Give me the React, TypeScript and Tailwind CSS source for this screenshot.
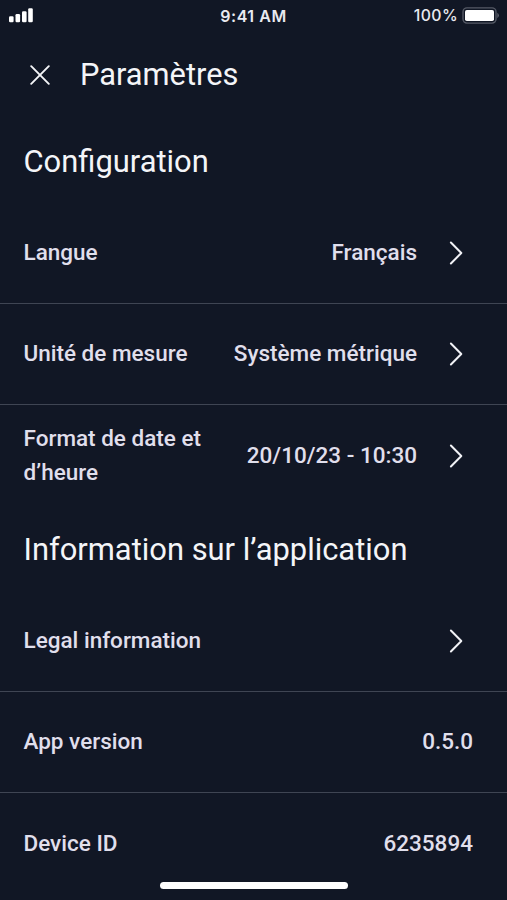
import { ReactNode } from "react";

interface SettingsRowProps {
  label: ReactNode;
  value?: string;
  chevron?: boolean;
  divider?: boolean;
}

function Chevron() {
  return (
    <svg width="16" height="24" viewBox="0 0 16 24" fill="none" className="ml-[31px] mr-[9px] shrink-0">
      <path
        d="M2.9 1.5 L13.3 12 L2.9 22.5"
        stroke="#F1F2F6"
        strokeWidth="2"
        strokeLinecap="round"
        strokeLinejoin="round"
      />
    </svg>
  );
}

function SettingsRow({ label, value, chevron, divider }: SettingsRowProps) {
  return (
    <div
      className={`h-[101.4px] shrink-0 flex items-center justify-between pl-[23.5px] pr-[34px] ${
        divider ? "border-b border-[#3F4553]" : ""
      }`}
    >
      <span className="leading-[33.8px]">{label}</span>
      <div className="flex items-center">
        {value && <span className="leading-[33.8px]">{value}</span>}
        {chevron && <Chevron />}
      </div>
    </div>
  );
}

function StatusBar() {
  return (
    <div className="h-[30px] shrink-0 grid grid-cols-[1fr_auto_1fr] items-center pl-[9px] pr-[7px] font-[Inter,sans-serif] text-[15.8px] text-[#E9EAF0]">
      <svg width="25" height="15" viewBox="0 0 25 15" fill="#FFFFFF">
        <rect x="0" y="8.3" width="4.6" height="6" rx="1.2" />
        <rect x="6.5" y="6" width="4.6" height="8.3" rx="1.2" />
        <rect x="13" y="3.3" width="4.6" height="11" rx="1.2" />
        <rect x="19.2" y="0.3" width="4.6" height="14" rx="1.2" />
      </svg>
      <span className="pt-0.5 mr-0.5 text-base font-semibold tracking-[0.55px]">9:41 AM</span>
      <div className="flex items-center justify-end gap-1">
        <span className="pt-0.5 tracking-[0.4px]">100%</span>
        <svg width="38" height="17" viewBox="0 0 38 17" fill="none">
          <rect x="1" y="0.9" width="33" height="15.2" rx="4" stroke="#555A66" strokeWidth="1.4" />
          <rect x="3" y="3" width="29" height="11" rx="1.8" fill="#FFFFFF" />
          <path d="M35.4 5.8 Q38.4 8.5 35.4 11.2 Z" fill="#646874" />
        </svg>
      </div>
    </div>
  );
}

export default function App() {
  return (
    <div className="w-full h-[900px] flex flex-col overflow-hidden bg-[#111725] font-[Roboto,sans-serif] text-[22.5px] font-medium text-[#E0DFEC]">
      <StatusBar />
      <header className="h-[89px] shrink-0 flex items-center pl-[30px] gap-[30px] text-[#F4F5F8]">
        <svg width="20" height="20" viewBox="0 0 20 20" fill="none">
          <path d="M1.2 1.2 L18.8 18.8 M18.8 1.2 L1.2 18.8" stroke="#F4F5F8" strokeWidth="1.9" strokeLinecap="round" />
        </svg>
        <h1 className="pt-px text-[30.8px] font-normal">Paramètres</h1>
      </header>
      <h2 className="h-[83.6px] shrink-0 pl-[23.5px] pt-[21px] text-[30.9px] leading-[44px] font-normal text-[#F4F5F8]">
        Configuration
      </h2>
      <SettingsRow label="Langue" value="Français" chevron divider />
      <SettingsRow label="Unité de mesure" value="Système métrique" chevron divider />
      <SettingsRow
        label={<>Format de date et<br />d’heure</>}
        value="20/10/23 - 10:30"
        chevron
      />
      <h2 className="h-[83.6px] shrink-0 pl-[23.5px] pt-[21px] text-[30.9px] leading-[44px] font-normal text-[#F4F5F8]">
        Information sur l’application
      </h2>
      <SettingsRow label="Legal information" chevron divider />
      <SettingsRow label="App version" value="0.5.0" divider />
      <SettingsRow label="Device ID" value="6235894" />
      {/* home indicator */}
      <div className="-mt-[12.6px] ml-[160px] h-[7px] w-[188px] shrink-0 rounded-full bg-white" />
    </div>
  );
}
